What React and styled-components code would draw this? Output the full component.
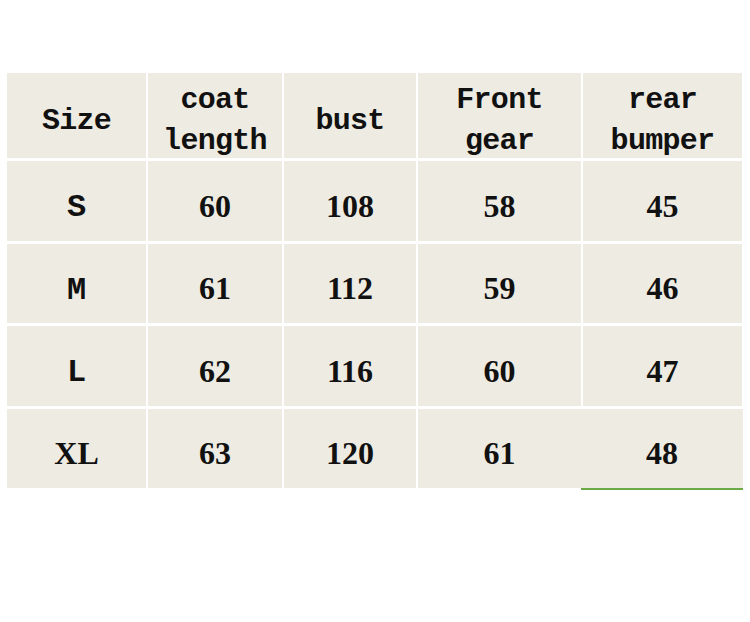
import React from "react";
import styled, { createGlobalStyle } from "styled-components";

const Global = createGlobalStyle`
  html, body { margin: 0; padding: 0; background: #ffffff; }
  body { width: 750px; height: 622px; overflow: hidden; }
`;

const Page = styled.div`
  padding: 73px 0 0 7px;
`;

const Table = styled.div`
  display: grid;
  grid-template-columns: 139px 134px 132px 163px 159px;
  grid-template-rows: 85px repeat(4, 79.5px);
  column-gap: 2px;
  row-gap: 3px;
  width: 735px;
`;

const Cell = styled.div`
  background: #eeebe2;
  display: flex;
  align-items: center;
  justify-content: center;
  text-align: center;
  padding-top: ${(p) => (p.$head ? 11 : p.$mono ? 15 : 10)}px;
  box-sizing: border-box;
  color: #111;
  font-weight: bold;
  font-family: ${(p) =>
    p.$mono ? '"Liberation Mono", "DejaVu Sans Mono", monospace' : '"Liberation Serif", "DejaVu Serif", serif'};
  font-size: ${(p) => (p.$head ? "30px" : "32px")};
  letter-spacing: ${(p) => (p.$head ? "-0.7px" : "0")};
  line-height: ${(p) => (p.$head ? "41px" : "1")};
  ${(p) => p.$underline && `border-bottom: 2px solid #6aaa48; margin-bottom: -2px; margin-left: -2px; margin-right: -1px;`}
`;

const headers = [["Size"], ["coat", "length"], ["bust"], ["Front", "gear"], ["rear", "bumper"]];

const rows = [
  ["S", "60", "108", "58", "45"],
  ["M", "61", "112", "59", "46"],
  ["L", "62", "116", "60", "47"],
  ["XL", "63", "120", "61", "48"],
];

export default function App() {
  return (
    <>
      <Global />
      <Page>
        <Table>
          {headers.map((h, i) => (
            <Cell key={"h" + i} $mono $head>
              <div>
                {h.map((line) => (
                  <div key={line}>{line}</div>
                ))}
              </div>
            </Cell>
          ))}
          {rows.map((r, ri) =>
            r.map((v, ci) => (
              <Cell
                key={ri + "-" + ci}
                $mono={ci === 0 && v !== "XL"}
                $underline={ri === 3 && ci === 4}
              >
                {v}
              </Cell>
            ))
          )}
        </Table>
      </Page>
    </>
  );
}
